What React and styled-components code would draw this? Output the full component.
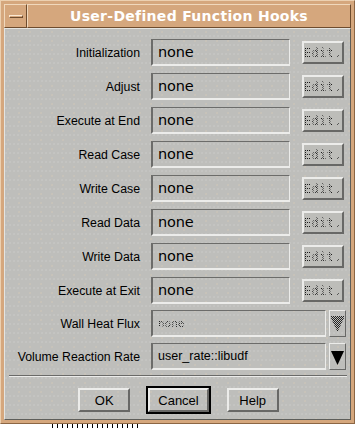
import React from 'react'
import styled, {createGlobalStyle} from 'styled-components'

const GlobalStyle = createGlobalStyle`
    html, body {
        margin: 0;
        padding: 0;
        background: #ffffff;
    }
    body {
        font-family: "Liberation Sans", Arial, sans-serif;
    }
`

const hooks = [
    'Initialization',
    'Adjust',
    'Execute at End',
    'Read Case',
    'Write Case',
    'Read Data',
    'Write Data',
    'Execute at Exit',
]

function App() {
  return (
    <>
        <GlobalStyle/>
        <Window>
            <TitleBar>
                <MenuButton><MenuBar/></MenuButton>
                <Title>User-Defined Function Hooks</Title>
            </TitleBar>
            <Body>
                <Rows>
                    {hooks.map(h => (
                        <Row key={h}>
                            <Label>{h}</Label>
                            <Controls>
                                <Field><FieldText>none</FieldText></Field>
                                <EditButton><Stipple>Edit.</Stipple></EditButton>
                            </Controls>
                        </Row>
                    ))}
                    <Row tight>
                        <Label>Wall Heat Flux</Label>
                        <Controls narrow>
                            <Field wide><Stipple small>none</Stipple></Field>
                            <ArrowButton><Arrow disabled/></ArrowButton>
                        </Controls>
                    </Row>
                    <Row tight>
                        <Label>Volume Reaction Rate</Label>
                        <Controls narrow>
                            <Field wide><ValueText>user_rate::libudf</ValueText></Field>
                            <ArrowButton><Arrow/></ArrowButton>
                        </Controls>
                    </Row>
                </Rows>
                <Separator/>
                <ButtonBar>
                    <PushButton>OK</PushButton>
                    <DefaultRing><PushButton>Cancel</PushButton></DefaultRing>
                    <PushButton>Help</PushButton>
                </ButtonBar>
            </Body>
        </Window>
        <Residue/>
    </>
  )
}

function Arrow({disabled}) {
    // motif style option-menu arrow: small bar on top, triangle below
    const fill = disabled ? 'url(#stip)' : '#000'
    return (
        <svg width="13" height="16" viewBox="0 0 13 16">
            <defs>
                <pattern id="stip" width="2" height="2" patternUnits="userSpaceOnUse">
                    <rect x="0" y="0" width="1" height="1" fill="#222"/>
                    <rect x="1" y="1" width="1" height="1" fill="#222"/>
                </pattern>
            </defs>
            {disabled && <rect x="0" y="0" width="13" height="2" fill={fill}/>}
            <polygon points="0,2 13,2 6.5,16" fill={fill}/>
        </svg>
    )
}

export default App

const Window = styled.div`
    width: 355px;
    height: 424px;
    box-sizing: border-box;
    background: #d5a77d;
    border-top: 1px solid #ecd0b0;
    border-left: 1px solid #ecd0b0;
    border-right: 1px solid #8c6644;
    border-bottom: 1px solid #8c6644;
    padding: 3px 3px 3px 3px;
    display: flex;
    flex-direction: column;
`

const TitleBar = styled.div`
    height: 24px;
    display: flex;
    flex-shrink: 0;
`

const bevelTan = `
    box-sizing: border-box;
    border-top: 1px solid #f0d8bc;
    border-left: 1px solid #f0d8bc;
    border-right: 1px solid #6e4c2e;
    border-bottom: 1px solid #6e4c2e;
`

const MenuButton = styled.div`
    ${bevelTan}
    width: 23px;
    display: flex;
    align-items: center;
    justify-content: center;
`

const MenuBar = styled.div`
    width: 14px;
    height: 3px;
    box-sizing: border-box;
    border-top: 1px solid #fbe8d2;
    border-left: 1px solid #fbe8d2;
    border-bottom: 1px solid #6e4c2e;
    border-right: 1px solid #6e4c2e;
`

const Title = styled.div`
    ${bevelTan}
    flex: 1;
    display: flex;
    align-items: center;
    justify-content: center;
    color: #ffffff;
    font-family: "DejaVu Sans", "Liberation Sans", sans-serif;
    font-weight: bold;
    font-size: 14px;
    letter-spacing: 0.3px;
`

const Body = styled.div`
    flex: 1;
    box-sizing: border-box;
    border-top: 1px solid #e4e4e0;
    border-left: 1px solid #e4e4e0;
    border-right: 1px solid #5e5e5a;
    border-bottom: 1px solid #5e5e5a;
    background-color: #bebebb;
    background-image:
        radial-gradient(circle at 1px 1px, rgba(240, 214, 180, 0.55) 0.5px, transparent 0.8px),
        radial-gradient(circle at 1px 1px, rgba(236, 236, 232, 0.45) 0.5px, transparent 0.8px);
    background-size: 11px 9px, 4px 9px;
    background-position: 2px 2px, 0 6px;
    display: flex;
    flex-direction: column;
`

const Rows = styled.div`
    padding-top: 10px;
    display: flex;
    flex-direction: column;
`

const Row = styled.div`
    display: grid;
    grid-template-columns: 135px auto;
    column-gap: 11px;
    align-items: center;
    height: 27px;
    margin-top: ${p => p.tight ? '6px' : '7px'};
    &:first-child {
        margin-top: 0;
    }
`

const Label = styled.div`
    text-align: right;
    font-size: 12.3px;
    color: #000;
    white-space: nowrap;
`

const Controls = styled.div`
    display: flex;
    align-items: center;
    gap: ${p => p.narrow ? '3px' : '12px'};
`

const Field = styled.div`
    box-sizing: border-box;
    width: ${p => p.wide ? '175px' : '139px'};
    height: 27px;
    border-top: 1px solid #6c6c6a;
    border-left: 2px solid #6c6c6a;
    border-right: 1px solid #ececea;
    border-bottom: 2px solid #ececea;
    display: flex;
    align-items: center;
    padding-left: 5px;
`

const FieldText = styled.span`
    font-family: "DejaVu Sans", sans-serif;
    font-size: 14.5px;
    color: #000;
    letter-spacing: -0.2px;
`

const ValueText = styled.span`
    font-size: 12.5px;
    color: #000;
`

const Stipple = styled.span`
    font-family: "DejaVu Sans Mono", "DejaVu Sans", monospace;
    font-size: ${p => p.small ? '11px' : '12px'};
    letter-spacing: ${p => p.small ? '0' : '0.5px'};
    color: transparent;
    background-image: repeating-conic-gradient(#1a1a1a 0 25%, transparent 0 50%);
    background-size: 2px 2px;
    -webkit-background-clip: text;
    background-clip: text;
`

const raised = `
    box-sizing: border-box;
    border-top: 2px solid #ececea;
    border-left: 2px solid #ececea;
    border-right: 2px solid #686866;
    border-bottom: 2px solid #686866;
    background: #bdbdb9;
`

const EditButton = styled.div`
    ${raised}
    width: 42px;
    height: 23px;
    display: flex;
    align-items: center;
    justify-content: center;
`

const ArrowButton = styled.div`
    box-sizing: border-box;
    width: 17px;
    height: 27px;
    border-top: 1px solid #ececea;
    border-left: 1px solid #ececea;
    border-right: 1px solid #686866;
    border-bottom: 1px solid #686866;
    display: flex;
    align-items: center;
    justify-content: center;
`

const Separator = styled.div`
    margin: 5px 3px 0 4px;
    height: 0;
    border-top: 1px solid #6a6a68;
    border-bottom: 1px solid #ececea;
`

const ButtonBar = styled.div`
    display: flex;
    justify-content: center;
    align-items: center;
    gap: 16px;
    margin-top: 9px;
    padding-left: 2px;
`

const PushButton = styled.div`
    ${raised}
    min-width: 52px;
    height: 24px;
    padding: 0 8px;
    display: flex;
    align-items: center;
    justify-content: center;
    font-size: 13px;
    color: #000;
    background: transparent;
`

const DefaultRing = styled.div`
    border: 2px solid #000;
    padding: 0;
    display: flex;
`

const Residue = styled.div`
    margin-left: 52px;
    width: 86px;
    height: 4px;
    background-image: repeating-linear-gradient(90deg, #000 0 1px, transparent 1px 5px);
`
